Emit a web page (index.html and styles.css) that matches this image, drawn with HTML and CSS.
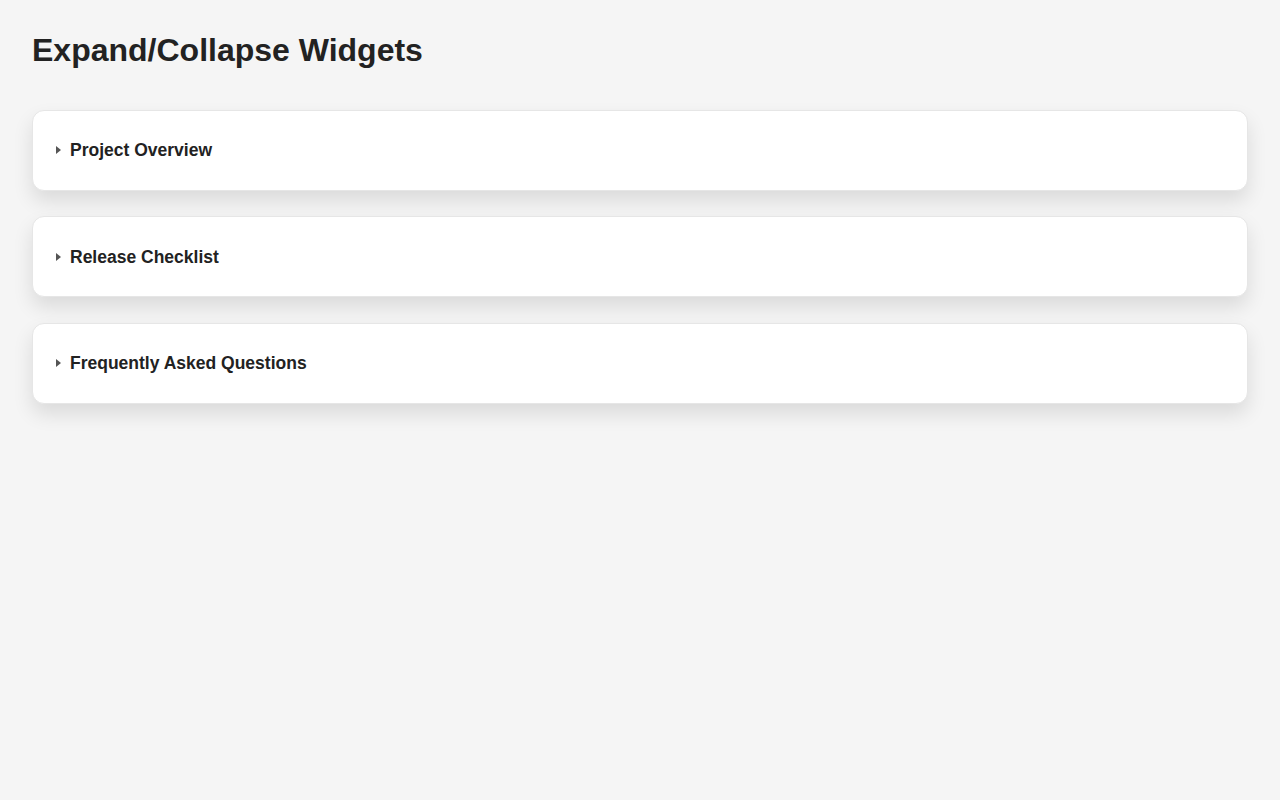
FILE: index.html
```html
<!DOCTYPE html>
<html lang="en">
<head>
<meta charset="utf-8">
<title>Expand/Collapse Widgets</title>
<link rel="stylesheet" href="styles.css">
</head>
<body>
<main class="page">
  <h1 class="title">Expand/Collapse Widgets</h1>
  <div class="list">
    <details class="card">
      <summary class="card-summary"><span class="caret"></span>Project Overview</summary>
      <p class="card-body">An overview of the project goals and timeline.</p>
    </details>
    <details class="card">
      <summary class="card-summary"><span class="caret"></span>Release Checklist</summary>
      <p class="card-body">Items to verify before each release.</p>
    </details>
    <details class="card">
      <summary class="card-summary"><span class="caret"></span>Frequently Asked Questions</summary>
      <p class="card-body">Answers to common questions.</p>
    </details>
  </div>
</main>
</body>
</html>
```
FILE: styles.css
```css
html, body {
  margin: 0;
  padding: 0;
  background: #f5f5f5;
}
body {
  font-family: "Liberation Sans", Arial, Helvetica, sans-serif;
  color: #222222;
}
.page {
  padding: 30px 32px 32px;
}
.title {
  margin: 0 0 39.5px;
  font-size: 32px;
  line-height: 40px;
  font-weight: 700;
  color: #222222;
}
.list {
  display: flex;
  flex-direction: column;
  gap: 25.5px;
}
.card {
  background: #ffffff;
  border: 1px solid #e6e6e6;
  border-radius: 12px;
  box-shadow: 0 10px 20px rgba(0, 0, 0, 0.11);
}
.card-summary {
  list-style: none;
  display: flex;
  align-items: center;
  gap: 9px;
  padding: 29.5px 22px 29.5px 23px;
  font-size: 17.5px;
  line-height: 20px;
  font-weight: 700;
  color: #222222;
  cursor: pointer;
}
.card-summary::-webkit-details-marker {
  display: none;
}
.caret {
  width: 0;
  height: 0;
  border-top: 4px solid transparent;
  border-bottom: 4px solid transparent;
  border-left: 5px solid #555555;
}
.card-body {
  margin: 0;
  padding: 0 22px 24px 60px;
  font-size: 15px;
  line-height: 1.5;
}
```
